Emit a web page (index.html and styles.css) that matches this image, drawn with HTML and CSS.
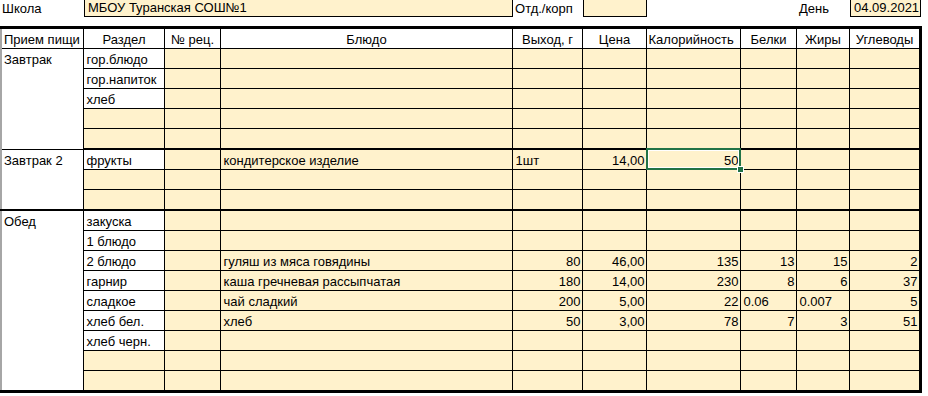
FILE: index.html
```html
<!DOCTYPE html>
<html lang="ru">
<head>
<meta charset="utf-8">
<title>Меню</title>
<link rel="stylesheet" href="styles.css">
</head>
<body>
<table class="top">
  <colgroup>
    <col class="c1"><col class="c2"><col class="c3"><col class="c4"><col class="c5"><col class="c6"><col class="c7"><col class="c8"><col class="c9"><col class="c10">
  </colgroup>
  <tr>
    <td class="lbl">Школа</td>
    <td class="field" colspan="3">МБОУ Туранская СОШ№1</td>
    <td class="lbl">Отд./корп</td>
    <td class="field"></td>
    <td></td>
    <td></td>
    <td class="lbl">День</td>
    <td class="field date">04.09.2021</td>
  </tr>
</table>

<table class="grid">
  <colgroup>
    <col class="c1"><col class="c2"><col class="c3"><col class="c4"><col class="c5"><col class="c6"><col class="c7"><col class="c8"><col class="c9"><col class="c10">
  </colgroup>
  <thead>
    <tr class="head">
      <th class="first left">Прием пищи</th>
      <th>Раздел</th>
      <th>№ рец.</th>
      <th>Блюдо</th>
      <th>Выход, г</th>
      <th>Цена</th>
      <th class="left">Калорийность</th>
      <th>Белки</th>
      <th>Жиры</th>
      <th>Углеводы</th>
    </tr>
  </thead>
  <tbody>
    <tr>
      <td class="meal first" rowspan="5">Завтрак</td>
      <td class="w">гор.блюдо</td><td></td><td></td><td></td><td></td><td></td><td></td><td></td><td></td>
    </tr>
    <tr><td class="w">гор.напиток</td><td></td><td></td><td></td><td></td><td></td><td></td><td></td><td></td></tr>
    <tr><td class="w">хлеб</td><td></td><td></td><td></td><td></td><td></td><td></td><td></td><td></td></tr>
    <tr><td></td><td></td><td></td><td></td><td></td><td></td><td></td><td></td><td></td></tr>
    <tr class="end"><td></td><td></td><td></td><td></td><td></td><td></td><td></td><td></td><td></td></tr>

    <tr>
      <td class="meal first end" rowspan="3">Завтрак 2</td>
      <td class="w">фрукты</td><td></td><td>кондитерское изделие</td><td>1шт</td><td class="num">14,00</td><td class="num sel">50</td><td></td><td></td><td></td>
    </tr>
    <tr><td></td><td></td><td></td><td></td><td></td><td></td><td></td><td></td><td></td></tr>
    <tr class="end"><td></td><td></td><td></td><td></td><td></td><td></td><td></td><td></td><td></td></tr>

    <tr>
      <td class="meal first end" rowspan="9">Обед</td>
      <td class="w">закуска</td><td></td><td></td><td></td><td></td><td></td><td></td><td></td><td></td>
    </tr>
    <tr><td class="w">1 блюдо</td><td></td><td></td><td></td><td></td><td></td><td></td><td></td><td></td></tr>
    <tr><td class="w">2 блюдо</td><td></td><td>гуляш из мяса говядины</td><td class="num">80</td><td class="num">46,00</td><td class="num">135</td><td class="num">13</td><td class="num">15</td><td class="num">2</td></tr>
    <tr><td class="w">гарнир</td><td></td><td>каша гречневая рассыпчатая</td><td class="num">180</td><td class="num">14,00</td><td class="num">230</td><td class="num">8</td><td class="num">6</td><td class="num">37</td></tr>
    <tr><td class="w">сладкое</td><td></td><td>чай сладкий</td><td class="num">200</td><td class="num">5,00</td><td class="num">22</td><td>0.06</td><td>0.007</td><td class="num">5</td></tr>
    <tr><td class="w">хлеб бел.</td><td></td><td>хлеб</td><td class="num">50</td><td class="num">3,00</td><td class="num">78</td><td class="num">7</td><td class="num">3</td><td class="num">51</td></tr>
    <tr><td class="w">хлеб черн.</td><td></td><td></td><td></td><td></td><td></td><td></td><td></td><td></td></tr>
    <tr><td></td><td></td><td></td><td></td><td></td><td></td><td></td><td></td><td></td></tr>
    <tr class="end"><td></td><td></td><td></td><td></td><td></td><td></td><td></td><td></td><td></td></tr>
  </tbody>
</table>
</body>
</html>
```

FILE: styles.css
```css
html, body {
  margin: 0;
  padding: 0;
  background: #ffffff;
}

body {
  font-family: "Liberation Sans", Arial, sans-serif;
  font-size: 13px;
  color: #000000;
}

table {
  table-layout: fixed;
  border-spacing: 0;
  width: 921px;
}

.c1 { width: 84px; }
.c2 { width: 81px; }
.c3 { width: 56px; }
.c4 { width: 292px; }
.c5 { width: 70px; }
.c6 { width: 64px; }
.c7 { width: 94px; }
.c8 { width: 56px; }
.c9 { width: 53px; }
.c10 { width: 71px; }

td, th {
  padding: 0 2px 0 3px;
  line-height: 16px;
  white-space: nowrap;
  overflow: hidden;
  vertical-align: bottom;
  font-weight: normal;
}

/* top line */
.top {
  border-collapse: separate;
  margin-bottom: 9px;
}

.top td {
  height: 16px;
  padding-bottom: 0;
}

.top .lbl {
  padding-left: 2px;
}

.top .field {
  background: #fff2cc;
  border-left: 1px solid #000;
  border-right: 1px solid #000;
  border-bottom: 1px solid #000;
}

.top .field.date {
  text-align: right;
  padding-right: 3px;
}

/* main grid */
.grid {
  border-collapse: collapse;
  width: 920px;
  border-top: 3px solid #000;
  border-right: 3px solid #000;
  border-bottom: 3px solid #000;
}

.grid .c1 { width: 82px; }

.grid td, .grid th {
  height: 19px;
  border: 1px solid #000;
  background: #fff2cc;
}

.grid th {
  background: #ffffff;
  text-align: center;
}

.grid th.left {
  text-align: left;
  padding-left: 2px;
}

.grid .first {
  border-left: 2px solid #a6a6a6;
}

.grid td.w,
.grid td.meal {
  background: #ffffff;
}

.grid td.meal {
  vertical-align: top;
  padding-top: 3px;
  padding-left: 2px;
}

.grid .end td,
.grid td.end {
  border-bottom: 2px solid #000;
}

.grid td.num {
  text-align: right;
  padding-right: 1px;
}

/* active cell */
.grid td.sel {
  position: relative;
  overflow: visible;
}

.grid td.sel::after {
  content: "";
  position: absolute;
  left: -1px;
  top: -2px;
  right: -1px;
  bottom: -1px;
  border: 2px solid #217346;
  box-shadow: inset 0 0 0 1px #ffffff;
  pointer-events: none;
}

.grid td.sel::before {
  content: "";
  position: absolute;
  right: -4px;
  bottom: -4px;
  width: 5px;
  height: 5px;
  background: #217346;
  border: 1px solid #ffffff;
  z-index: 1;
}
```
